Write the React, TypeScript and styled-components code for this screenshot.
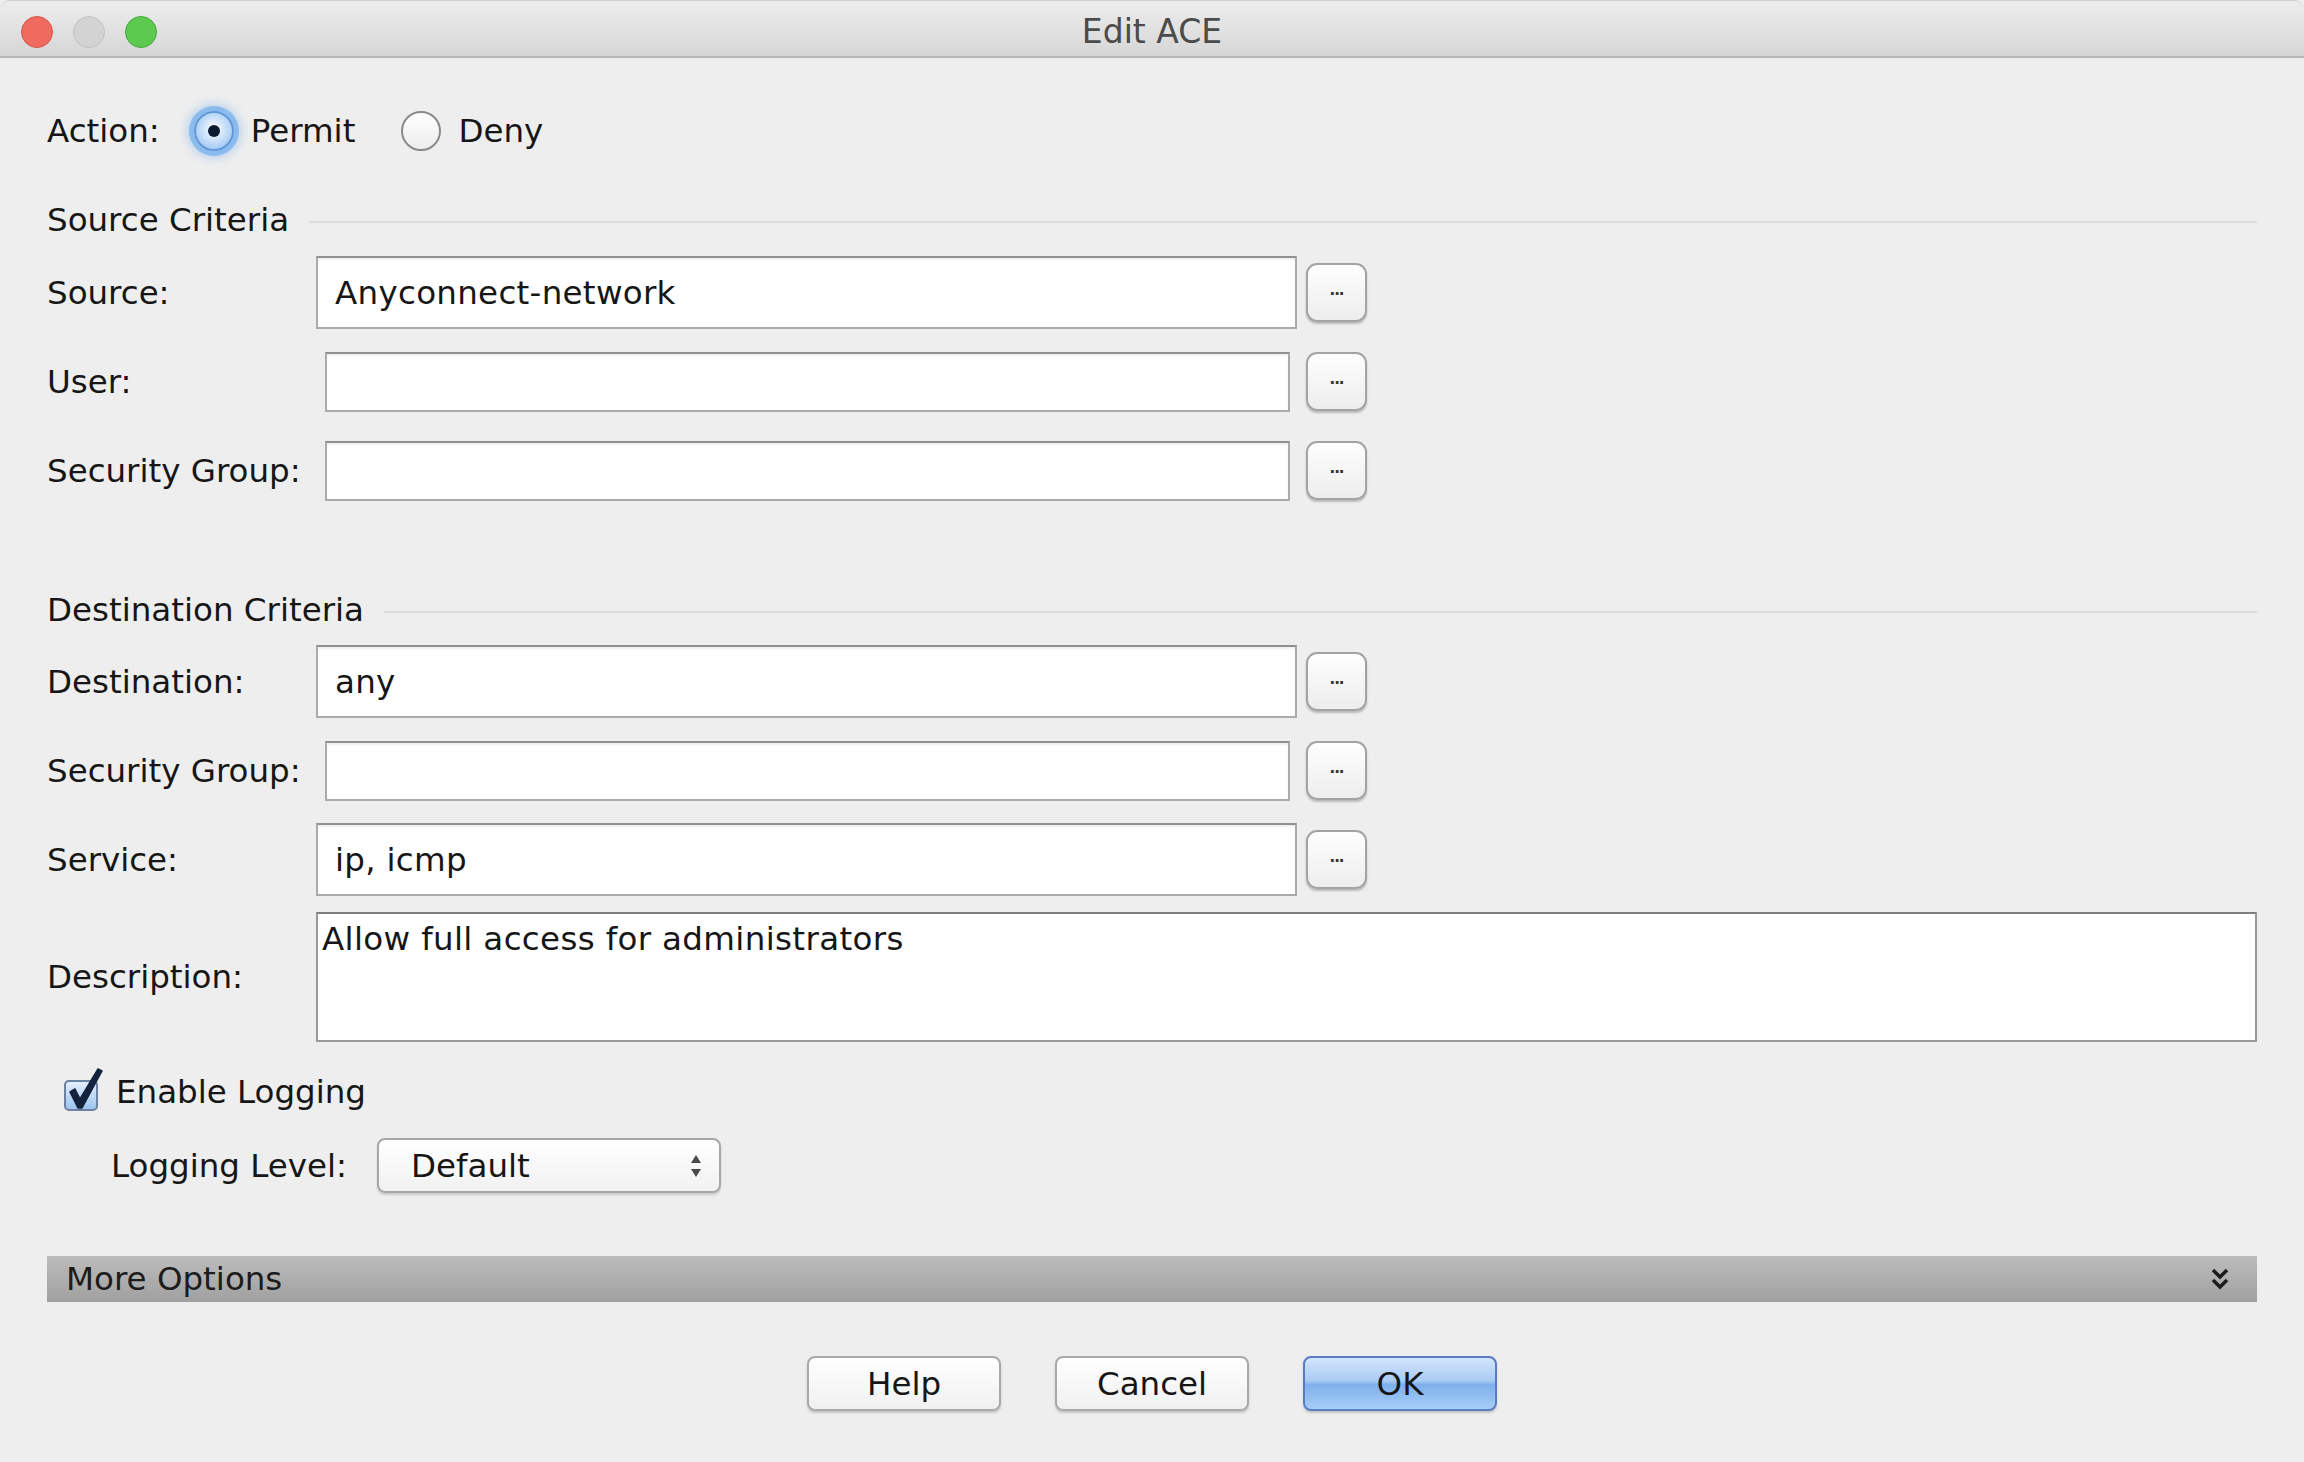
import React from "react";
import styled, { createGlobalStyle, css } from "styled-components";

const FONT = `"DejaVu Sans", "Liberation Sans", Arial, sans-serif`;

const GlobalStyle = createGlobalStyle`
  html, body { margin: 0; padding: 0; background: #eeeeee; }
  body { font-family: ${FONT}; }
  * { box-sizing: border-box; }
`;

const Window = styled.div`
  width: 2304px;
  height: 1462px;
  background: #eeeeee;
  color: #161616;
  font-family: ${FONT};
  font-size: 32.5px;
  display: flex;
  flex-direction: column;
  overflow: hidden;
`;

const TitleBar = styled.div`
  flex: none;
  height: 58px;
  padding: 6px 21px 0;
  display: grid;
  grid-template-columns: 1fr auto 1fr;
  align-items: center;
  background: linear-gradient(#ededed, #d6d6d6);
  border-bottom: 2px solid #b6b6b6;
  border-top: 1px solid #d0d0d0;
  border-radius: 10px 10px 0 0;
`;

const Lights = styled.div`
  display: flex;
  gap: 20px;
`;

const Light = styled.span<{ $color: string; $edge: string }>`
  width: 32px;
  height: 32px;
  border-radius: 50%;
  background: ${(p) => p.$color};
  border: 1px solid ${(p) => p.$edge};
`;

const Title = styled.div`
  font-size: 33px;
  color: #4b4b4b;
`;

const Content = styled.div`
  padding: 0 47px;
  display: flex;
  flex-direction: column;
`;

const ActionRow = styled.div`
  margin-top: 47px;
  height: 52px;
  display: flex;
  align-items: center;
`;

const ActionLabel = styled.span`
  margin-right: 34px;
`;

const RadioOption = styled.label`
  display: flex;
  align-items: center;
  gap: 17px;
  margin-right: 46px;
`;

const RadioCircle = styled.span<{ $checked?: boolean }>`
  width: 40px;
  height: 40px;
  border-radius: 50%;
  display: flex;
  align-items: center;
  justify-content: center;
  ${(p) =>
    p.$checked
      ? css`
          background: radial-gradient(circle at 50% 45%, #ffffff 0%, #cfe3fa 40%, #86b9ee 100%);
          border: 2px solid #5f98d8;
          box-shadow: 0 0 0 5px rgba(120, 178, 238, 0.75), 0 0 9px 8px rgba(132, 185, 240, 0.45);
        `
      : css`
          background: linear-gradient(#ffffff, #ececec);
          border: 2px solid #8a8a8a;
        `}
`;

const RadioDot = styled.span`
  width: 12px;
  height: 12px;
  border-radius: 50%;
  background: #0c1a30;
`;

const SectionHeader = styled.div<{ $top: number }>`
  margin-top: ${(p) => p.$top}px;
  height: 40px;
  display: flex;
  align-items: center;
  gap: 20px;
`;

const SectionRule = styled.span`
  flex: 1;
  height: 2px;
  margin-top: 4px;
  background: #dadada;
`;

const FormGrid = styled.div<{ $top: number }>`
  margin-top: ${(p) => p.$top}px;
  display: grid;
  grid-template-columns: 269px 981px 70px 1fr;
  row-gap: 16px;
  align-items: center;
`;

const FieldLabel = styled.span`
  grid-column: 1;
`;

const FieldSlot = styled.div<{ $wide?: boolean }>`
  grid-column: ${(p) => (p.$wide ? "2 / -1" : "2")};
  height: ${(p) => (p.$wide ? 130 : 73)}px;
  display: flex;
  align-items: center;
`;

const TextField = styled.div<{ $small?: boolean }>`
  background: #ffffff;
  border: 2px solid #ababab;
  border-top-color: #909090;
  box-shadow: inset 0 2px 2px rgba(0, 0, 0, 0.06);
  display: flex;
  align-items: center;
  padding-left: 17px;
  white-space: nowrap;
  letter-spacing: 0.3px;
  ${(p) =>
    p.$small
      ? css`
          width: 965px;
          height: 60px;
          margin-left: 9px;
        `
      : css`
          width: 981px;
          height: 73px;
        `}
`;

const TextArea = styled.div`
  width: 100%;
  height: 130px;
  background: #ffffff;
  border: 2px solid #9a9a9a;
  border-top-color: #7e7e7e;
  padding: 4px 4px;
  line-height: 1.3;
  letter-spacing: 0.35px;
`;

const BrowseButton = styled.button`
  grid-column: 3;
  margin-left: 9px;
  width: 61px;
  height: 59px;
  padding: 0 0 6px;
  border-radius: 11px;
  border: 2px solid #a3a3a3;
  background: linear-gradient(#fefefe, #ededed);
  box-shadow: 0 2px 2px rgba(0, 0, 0, 0.22);
  font-family: ${FONT};
  font-size: 15px;
  font-weight: bold;
  letter-spacing: -1px;
  color: #333;
  display: flex;
  align-items: center;
  justify-content: center;
`;

const CheckRow = styled.div`
  margin-top: 30px;
  height: 40px;
  padding-left: 17px;
  display: flex;
  align-items: center;
  gap: 18px;
`;

const CheckBox = styled.span`
  position: relative;
  width: 34px;
  height: 31px;
  margin-top: 6px;
  border-radius: 5px;
  border: 2px solid #6d82a3;
  background: linear-gradient(#e3effd, #9ec4ef);
`;

const CheckMark = styled.svg`
  position: absolute;
  left: -2px;
  top: -14px;
  width: 40px;
  height: 45px;
  overflow: visible;
`;

const LevelRow = styled.div`
  margin-top: 26px;
  height: 55px;
  padding-left: 64px;
  display: flex;
  align-items: center;
  gap: 30px;
`;

const Select = styled.div`
  width: 344px;
  height: 55px;
  padding: 0 17px 0 32px;
  border: 2px solid #a7a7a7;
  border-radius: 8px;
  background: linear-gradient(#ffffff, #f1f1f1);
  box-shadow: 0 2px 2px rgba(0, 0, 0, 0.15);
  display: flex;
  align-items: center;
  justify-content: space-between;
`;

const MoreOptions = styled.div`
  margin-top: 63px;
  height: 46px;
  padding: 0 27px 0 19px;
  background: linear-gradient(#bcbcbc, #a0a0a0);
  display: flex;
  align-items: center;
  justify-content: space-between;
  color: #1c1c1c;
`;

const ButtonRow = styled.div`
  margin-top: 54px;
  display: flex;
  justify-content: center;
  gap: 54px;
`;

const DialogButton = styled.button<{ $primary?: boolean }>`
  width: 194px;
  height: 55px;
  border-radius: 8px;
  font-family: ${FONT};
  font-size: 32.5px;
  color: #161616;
  padding: 0;
  ${(p) =>
    p.$primary
      ? css`
          border: 2px solid #5b7cc4;
          background: linear-gradient(#d3e5fb 0%, #a9cbf4 45%, #7fb0ec 52%, #a6cdf7 100%);
        `
      : css`
          border: 2px solid #a9a9a9;
          background: linear-gradient(#ffffff, #f0f0f0);
        `}
  box-shadow: 0 2px 2px rgba(0, 0, 0, 0.18);
`;

type Row = { label: string; value?: string; small?: boolean };

const sourceRows: Row[] = [
  { label: "Source:", value: "Anyconnect-network" },
  { label: "User:", small: true },
  { label: "Security Group:", small: true },
];

const destRows: Row[] = [
  { label: "Destination:", value: "any" },
  { label: "Security Group:", small: true },
  { label: "Service:", value: "ip, icmp" },
];

function FieldRows({ rows }: { rows: Row[] }) {
  return (
    <>
      {rows.map((r, i) => (
        <React.Fragment key={i}>
          <FieldLabel>{r.label}</FieldLabel>
          <FieldSlot>
            <TextField $small={r.small}>{r.value ?? ""}</TextField>
          </FieldSlot>
          <BrowseButton>...</BrowseButton>
        </React.Fragment>
      ))}
    </>
  );
}

export default function App() {
  return (
    <>
      <GlobalStyle />
      <Window>
        <TitleBar>
          <Lights>
            <Light $color="#ef6b5f" $edge="#d9564b" />
            <Light $color="#d3d3d3" $edge="#c2c2c2" />
            <Light $color="#5cc94f" $edge="#48aa3c" />
          </Lights>
          <Title>Edit ACE</Title>
          <span />
        </TitleBar>
        <Content>
          <ActionRow>
            <ActionLabel>Action:</ActionLabel>
            <RadioOption>
              <RadioCircle $checked>
                <RadioDot />
              </RadioCircle>
              Permit
            </RadioOption>
            <RadioOption>
              <RadioCircle />
              Deny
            </RadioOption>
          </ActionRow>

          <SectionHeader $top={43}>
            Source Criteria
            <SectionRule />
          </SectionHeader>
          <FormGrid $top={16}>
            <FieldRows rows={sourceRows} />
          </FormGrid>

          <SectionHeader $top={83}>
            Destination Criteria
            <SectionRule />
          </SectionHeader>
          <FormGrid $top={15}>
            <FieldRows rows={destRows} />
            <FieldLabel>Description:</FieldLabel>
            <FieldSlot $wide>
              <TextArea>Allow full access for administrators</TextArea>
            </FieldSlot>
          </FormGrid>

          <CheckRow>
            <CheckBox>
              <CheckMark viewBox="0 0 40 45">
                <path
                  d="M6 24 L11 21 L16 31 L34 1 L38 3 L18 40 L14 40 Z"
                  fill="#13223d"
                  stroke="#13223d"
                  strokeWidth="1.5"
                  strokeLinejoin="round"
                />
              </CheckMark>
            </CheckBox>
            Enable Logging
          </CheckRow>

          <LevelRow>
            Logging Level:
            <Select>
              Default
              <svg width="12" height="30" viewBox="0 0 12 30">
                <polygon points="1,12 6,4 11,12" fill="#4a4a4a" />
                <polygon points="1,18 6,26 11,18" fill="#4a4a4a" />
              </svg>
            </Select>
          </LevelRow>

          <MoreOptions>
            More Options
            <svg width="20" height="24" viewBox="0 0 20 24">
              <path d="M3 3 L10 10 L17 3" fill="none" stroke="#1c1c1c" strokeWidth="3.5" />
              <path d="M3 13 L10 20 L17 13" fill="none" stroke="#1c1c1c" strokeWidth="3.5" />
            </svg>
          </MoreOptions>

          <ButtonRow>
            <DialogButton>Help</DialogButton>
            <DialogButton>Cancel</DialogButton>
            <DialogButton $primary>OK</DialogButton>
          </ButtonRow>
        </Content>
      </Window>
    </>
  );
}
